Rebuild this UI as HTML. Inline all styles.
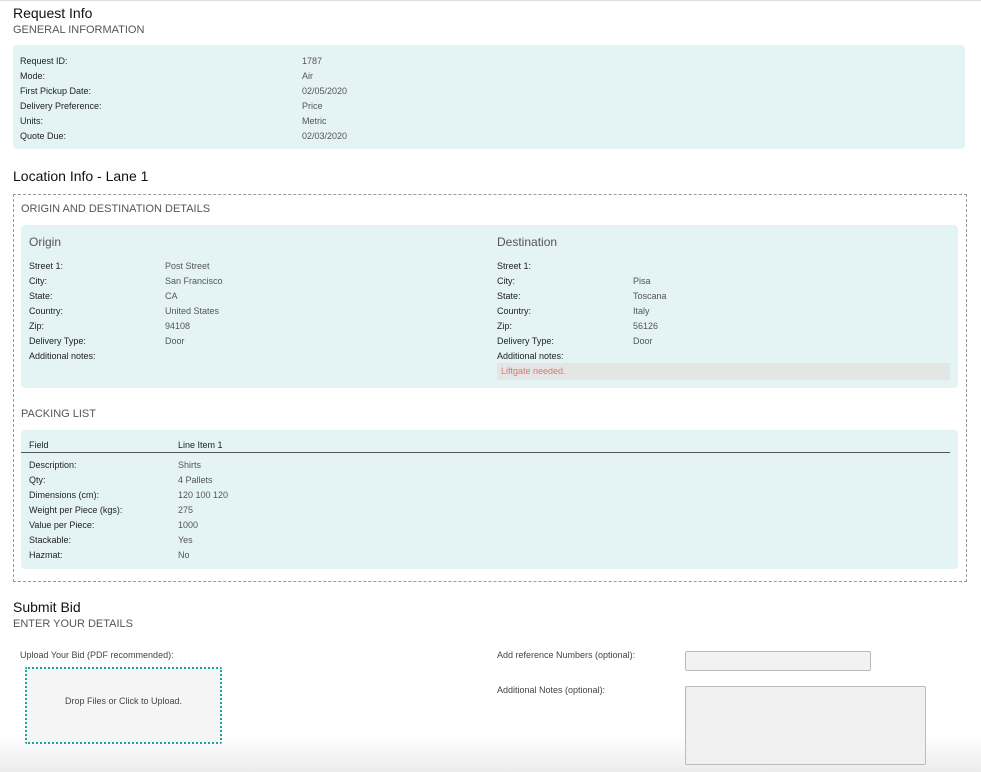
<!DOCTYPE html>
<html><head><meta charset="utf-8"><style>
*{margin:0;padding:0;box-sizing:border-box}
body{width:981px;height:772px;position:relative;overflow:hidden;background:#fff;font-family:"Liberation Sans",sans-serif;color:#222}
.a{position:absolute;white-space:nowrap}
.h{font-size:14px;color:#111}
.s{font-size:11px;color:#555}
.t{font-size:9px;line-height:12px}
.v{font-size:9px;line-height:12px;color:#555}
.box{position:absolute;background:#e4f3f3;border-radius:4px}
</style></head><body>
<div class="a" style="left:0;top:0;width:981px;height:1px;background:#ddd"></div>
<div class="a h" style="left:13px;top:5px">Request Info</div>
<div class="a s" style="left:13px;top:24px">GENERAL INFORMATION</div>
<div class="box" style="left:13px;top:45px;width:952px;height:104px"></div>
<div class="a t" style="left:20px;top:54px;line-height:15px">Request ID:<br>Mode:<br>First Pickup Date:<br>Delivery Preference:<br>Units:<br>Quote Due:</div>
<div class="a v" style="left:302px;top:54px;line-height:15px">1787<br>Air<br>02/05/2020<br>Price<br>Metric<br>02/03/2020</div>

<div class="a h" style="left:13px;top:168px">Location Info - Lane 1</div>
<div class="a" style="left:13px;top:194px;width:954px;height:388px;border:1px dashed #999"></div>
<div class="a s" style="left:21px;top:203px">ORIGIN AND DESTINATION DETAILS</div>
<div class="box" style="left:21px;top:225px;width:937px;height:163px"></div>
<div class="a" style="left:29px;top:235px;font-size:12px;color:#555">Origin</div>
<div class="a" style="left:497px;top:235px;font-size:12px;color:#555">Destination</div>
<div class="a t" style="left:29px;top:259px;line-height:15px">Street 1:<br>City:<br>State:<br>Country:<br>Zip:<br>Delivery Type:<br>Additional notes:</div>
<div class="a v" style="left:165px;top:259px;line-height:15px">Post Street<br>San Francisco<br>CA<br>United States<br>94108<br>Door</div>
<div class="a t" style="left:497px;top:259px;line-height:15px">Street 1:<br>City:<br>State:<br>Country:<br>Zip:<br>Delivery Type:<br>Additional notes:</div>
<div class="a v" style="left:633px;top:259px;line-height:15px">&nbsp;<br>Pisa<br>Toscana<br>Italy<br>56126<br>Door</div>
<div class="a" style="left:497px;top:363px;width:453px;height:17px;background:#e3e6e5"></div>
<div class="a" style="left:501px;top:366px;font-size:9px;color:#d9786a">Liftgate needed.</div>

<div class="a s" style="left:21px;top:408px">PACKING LIST</div>
<div class="box" style="left:21px;top:430px;width:937px;height:139px"></div>
<div class="a t" style="left:29px;top:439px">Field</div>
<div class="a t" style="left:178px;top:439px">Line Item 1</div>
<div class="a" style="left:21px;top:452px;width:929px;height:1px;background:#555"></div>
<div class="a t" style="left:29px;top:458px;line-height:15px">Description:<br>Qty:<br>Dimensions (cm):<br>Weight per Piece (kgs):<br>Value per Piece:<br>Stackable:<br>Hazmat:</div>
<div class="a v" style="left:178px;top:458px;line-height:15px">Shirts<br>4 Pallets<br>120 100 120<br>275<br>1000<br>Yes<br>No</div>

<div class="a" style="left:0;top:735px;width:981px;height:37px;background:linear-gradient(#fff,#ececec)"></div>
<div class="a h" style="left:13px;top:599px">Submit Bid</div>
<div class="a s" style="left:13px;top:618px">ENTER YOUR DETAILS</div>
<div class="a v" style="left:20px;top:649px;color:#444">Upload Your Bid (PDF recommended):</div>
<div class="a" style="left:25px;top:667px;width:197px;height:77px;border:2px dotted #1fa39a;background:#f5f5f5;border-radius:2px"></div>
<div class="a v" style="left:25px;top:695px;width:197px;text-align:center;color:#444">Drop Files or Click to Upload.</div>
<div class="a v" style="left:497px;top:649px;color:#444">Add reference Numbers (optional):</div>
<div class="a" style="left:685px;top:651px;width:186px;height:20px;border:1px solid #bbb;background:#f2f2f2;border-radius:2px"></div>
<div class="a v" style="left:497px;top:684px;color:#444">Additional Notes (optional):</div>
<div class="a" style="left:685px;top:686px;width:241px;height:79px;border:1px solid #bbb;background:#f0f0f0;border-radius:2px"></div>
</body></html>
